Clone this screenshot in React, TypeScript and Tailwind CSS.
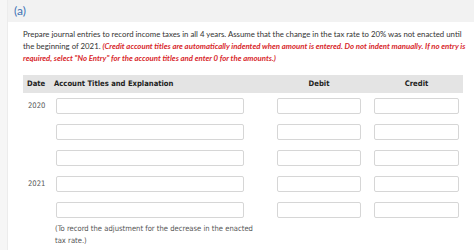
const ROWS = ['2020', '', '', '2021', ''];

function Campo({ ancho }: { ancho: string }) {
  return <div className={`${ancho} h-[16px] rounded-[2px] border border-[#d6d6d6] bg-white`} />;
}

export default function App() {
  return (
    <div className="flex h-[250px] w-[474px] overflow-hidden bg-[#f6f6f6]">
      <div className="ml-[7px] flex-1 border-l border-[#ececec] bg-white">
        {/* cabecera (a) */}
        <div className="flex h-[22px] items-center bg-[#f2f2f2] pl-[6px] font-['Lato',sans-serif] text-[12px] text-[#3d73b5]">
          (a)
        </div>

        <div className="pl-[15px] pr-[5px]">
          <p className="mt-[6px] w-[445px] font-['Lato',sans-serif] text-[7.8px] leading-[12px] text-[#333]">
            Prepare journal entries to record income taxes in all 4 years. Assume that the change in the tax rate to 20% was not enacted until
            the beginning of 2021.{' '}
            <em className="font-bold text-[#d8282c]">
              (Credit account titles are automatically indented when amount is entered. Do not indent manually. If no entry is
              required, select "No Entry" for the account titles and enter 0 for the amounts.)
            </em>
          </p>

          {/* tabla */}
          <div className="mt-[11px] w-[440px] font-['DejaVu_Sans_Condensed','DejaVu_Sans',sans-serif] text-[7.6px]">
            <div className="flex h-[18px] items-center bg-[#e4e4e4] font-bold text-[#222]">
              <div className="w-[31px] pl-[4px]">Date</div>
              <div className="w-[223px]">Account Titles and Explanation</div>
              <div className="w-[84px] text-center">Debit</div>
              <div className="ml-[13px] w-[85px] text-center">Credit</div>
            </div>

            <div className="mt-[5px] flex flex-col gap-[10px]">
              {ROWS.map((fecha, i) => (
                <div key={i} className="flex items-center">
                  <div className="w-[33px] pl-[5px] text-[#555]">{fecha}</div>
                  <Campo ancho="w-[188px]" />
                  <div className="ml-[33px]">
                    <Campo ancho="w-[84px]" />
                  </div>
                  <div className="ml-[13px]">
                    <Campo ancho="w-[85px]" />
                  </div>
                </div>
              ))}
            </div>

            <p className="ml-[32px] mt-[5px] w-[205px] leading-[12px] text-[#555]">
              (To record the adjustment for the decrease in the enacted tax rate.)
            </p>
          </div>
        </div>
      </div>
    </div>
  );
}
